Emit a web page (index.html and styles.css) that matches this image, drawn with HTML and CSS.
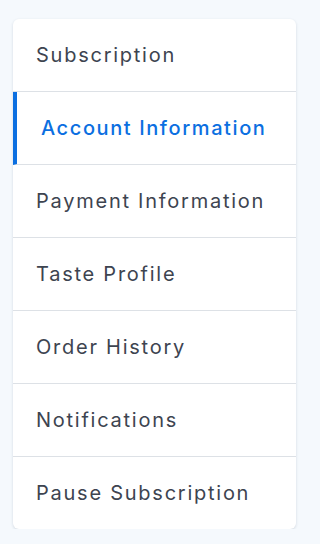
FILE: index.html
```html
<!DOCTYPE html>
<html lang="en">
<head>
<meta charset="utf-8">
<title>Account menu</title>
<link rel="stylesheet" href="styles.css">
</head>
<body>
<nav class="menu">
  <a class="item" href="#">Subscription</a>
  <a class="item active" href="#">Account Information</a>
  <a class="item" href="#">Payment Information</a>
  <a class="item" href="#">Taste Profile</a>
  <a class="item" href="#">Order History</a>
  <a class="item" href="#">Notifications</a>
  <a class="item" href="#">Pause Subscription</a>
</nav>
</body>
</html>
```
FILE: styles.css
```css
html, body {
  margin: 0;
  padding: 0;
  background: #f5f9fd;
}
body {
  padding: 19px 16px 0 13px;
  font-family: Inter, "DejaVu Sans", sans-serif;
}
.menu {
  width: 283px;
  background: #ffffff;
  border-radius: 6px;
  box-shadow: 0 1px 3px rgba(30, 50, 80, 0.16);
  display: flex;
  flex-direction: column;
  overflow: hidden;
}
.item {
  display: flex;
  align-items: center;
  height: 72px;
  padding-left: 23px;
  border-bottom: 1px solid #dde1e6;
  color: #3d4450;
  text-decoration: none;
  font-size: 20px;
  letter-spacing: 1.75px;
  box-sizing: content-box;
}
.item:last-child {
  border-bottom: none;
}
.item.active {
  color: #0b6fe1;
  font-weight: 500;
  padding-left: 24px;
  border-left: 4px solid #0b6fe1;
  letter-spacing: 1.6px;
}
```
